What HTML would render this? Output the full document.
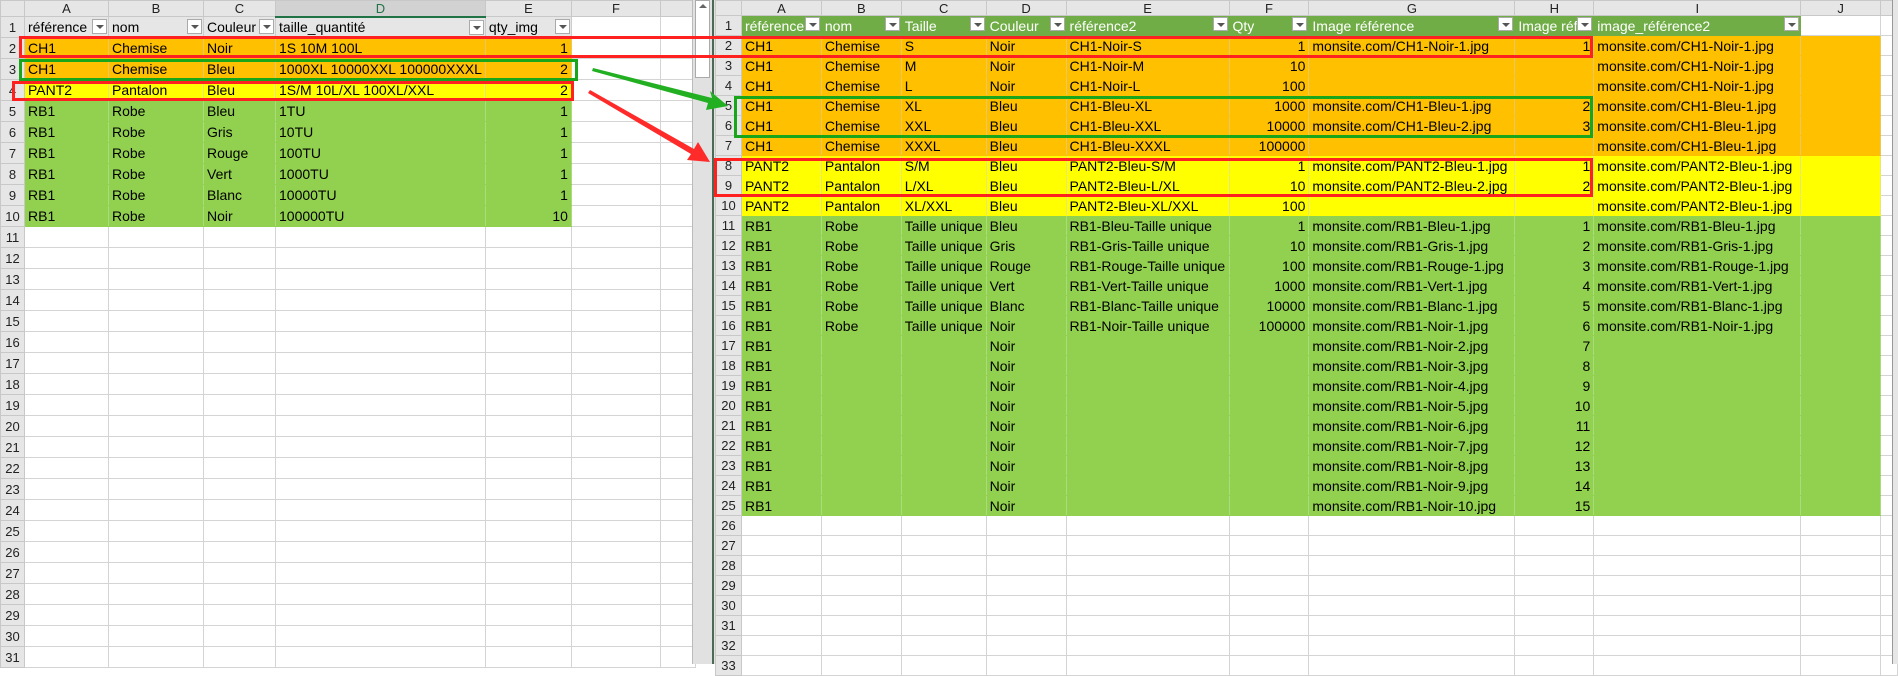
<!DOCTYPE html>
<html><head><meta charset="utf-8">
<style>
*{margin:0;padding:0;box-sizing:border-box}
body{width:1898px;height:664px;overflow:hidden;background:#fff;font-family:"Liberation Sans",sans-serif;font-size:14px;color:#000;position:relative}
table{border-collapse:collapse;table-layout:fixed;position:absolute;top:0}
td{border:1px solid #d4d4d4;white-space:nowrap;overflow:hidden;padding:0 3px;line-height:1;vertical-align:middle;position:relative}
td.h{background:#e6e6e6;text-align:center;color:#222;border-color:#c8c8c8;font-size:13px}
td.r{background:#e6e6e6;text-align:center;color:#222;border-color:#c8c8c8;font-size:13px}
td.n{text-align:right}
.o td.c{background:#ffc000;border-color:#ffc000 #e9c766}
.y td.c{background:#ffff00;border-color:#ffff00 #e6e680}
.g td.c{background:#92d050;border-color:#92d050 #a9dc7a}
.hdL td.c{background:#e7e6e6;border-color:#e7e6e6 #ccc}
.hdR td.c{background:#70ad47;color:#fff;border-color:#70ad47}
.dd{position:absolute;right:1px;top:2px;width:15px;height:15px;background:#fff;border:1px solid #aaa}
#R .dd{top:1px;height:14px}
.dd:after{content:"";position:absolute;left:3px;top:5px;border-left:4px solid transparent;border-right:4px solid transparent;border-top:4px solid #555}
#L{left:0}
#L tr{height:21px}
#L tr.top{height:16px}
#R{left:715px}
#R tr{height:20px}
#R tr.top{height:15px}
.box{position:absolute;border:3px solid;pointer-events:none}
</style></head><body>
<table id="L">
<colgroup><col style="width:24px"><col style="width:84px"><col style="width:95px"><col style="width:72px"><col style="width:207px"><col style="width:86px"><col style="width:89px"><col style="width:35px"></colgroup>
<tr class="top"><td class="h"></td><td class="h">A</td><td class="h">B</td><td class="h">C</td><td class="h" style="background:#d2d2d2;border-bottom:2px solid #217346;color:#217346">D</td><td class="h">E</td><td class="h">F</td><td class="h"></td></tr>
<tr class="hdL"><td class="r">1</td><td class="c">référence<span class="dd"></span></td><td class="c">nom<span class="dd"></span></td><td class="c">Couleur<span class="dd"></span></td><td class="c">taille_quantité<span class="dd"></span></td><td class="c">qty_img<span class="dd"></span></td><td></td><td></td></tr>
<tr class="o"><td class="r">2</td><td class="c">CH1</td><td class="c">Chemise</td><td class="c">Noir</td><td class="c">1S 10M 100L</td><td class="c n">1</td><td></td><td></td></tr>
<tr class="o"><td class="r">3</td><td class="c">CH1</td><td class="c">Chemise</td><td class="c">Bleu</td><td class="c">1000XL 10000XXL 100000XXXL</td><td class="c n">2</td><td></td><td></td></tr>
<tr class="y"><td class="r">4</td><td class="c">PANT2</td><td class="c">Pantalon</td><td class="c">Bleu</td><td class="c">1S/M 10L/XL 100XL/XXL</td><td class="c n">2</td><td></td><td></td></tr>
<tr class="g"><td class="r">5</td><td class="c">RB1</td><td class="c">Robe</td><td class="c">Bleu</td><td class="c">1TU</td><td class="c n">1</td><td></td><td></td></tr>
<tr class="g"><td class="r">6</td><td class="c">RB1</td><td class="c">Robe</td><td class="c">Gris</td><td class="c">10TU</td><td class="c n">1</td><td></td><td></td></tr>
<tr class="g"><td class="r">7</td><td class="c">RB1</td><td class="c">Robe</td><td class="c">Rouge</td><td class="c">100TU</td><td class="c n">1</td><td></td><td></td></tr>
<tr class="g"><td class="r">8</td><td class="c">RB1</td><td class="c">Robe</td><td class="c">Vert</td><td class="c">1000TU</td><td class="c n">1</td><td></td><td></td></tr>
<tr class="g"><td class="r">9</td><td class="c">RB1</td><td class="c">Robe</td><td class="c">Blanc</td><td class="c">10000TU</td><td class="c n">1</td><td></td><td></td></tr>
<tr class="g"><td class="r">10</td><td class="c">RB1</td><td class="c">Robe</td><td class="c">Noir</td><td class="c">100000TU</td><td class="c n">10</td><td></td><td></td></tr>
<tr><td class="r">11</td><td></td><td></td><td></td><td></td><td></td><td></td><td></td></tr>
<tr><td class="r">12</td><td></td><td></td><td></td><td></td><td></td><td></td><td></td></tr>
<tr><td class="r">13</td><td></td><td></td><td></td><td></td><td></td><td></td><td></td></tr>
<tr><td class="r">14</td><td></td><td></td><td></td><td></td><td></td><td></td><td></td></tr>
<tr><td class="r">15</td><td></td><td></td><td></td><td></td><td></td><td></td><td></td></tr>
<tr><td class="r">16</td><td></td><td></td><td></td><td></td><td></td><td></td><td></td></tr>
<tr><td class="r">17</td><td></td><td></td><td></td><td></td><td></td><td></td><td></td></tr>
<tr><td class="r">18</td><td></td><td></td><td></td><td></td><td></td><td></td><td></td></tr>
<tr><td class="r">19</td><td></td><td></td><td></td><td></td><td></td><td></td><td></td></tr>
<tr><td class="r">20</td><td></td><td></td><td></td><td></td><td></td><td></td><td></td></tr>
<tr><td class="r">21</td><td></td><td></td><td></td><td></td><td></td><td></td><td></td></tr>
<tr><td class="r">22</td><td></td><td></td><td></td><td></td><td></td><td></td><td></td></tr>
<tr><td class="r">23</td><td></td><td></td><td></td><td></td><td></td><td></td><td></td></tr>
<tr><td class="r">24</td><td></td><td></td><td></td><td></td><td></td><td></td><td></td></tr>
<tr><td class="r">25</td><td></td><td></td><td></td><td></td><td></td><td></td><td></td></tr>
<tr><td class="r">26</td><td></td><td></td><td></td><td></td><td></td><td></td><td></td></tr>
<tr><td class="r">27</td><td></td><td></td><td></td><td></td><td></td><td></td><td></td></tr>
<tr><td class="r">28</td><td></td><td></td><td></td><td></td><td></td><td></td><td></td></tr>
<tr><td class="r">29</td><td></td><td></td><td></td><td></td><td></td><td></td><td></td></tr>
<tr><td class="r">30</td><td></td><td></td><td></td><td></td><td></td><td></td><td></td></tr>
<tr><td class="r">31</td><td></td><td></td><td></td><td></td><td></td><td></td><td></td></tr>
</table>

<div style="position:absolute;left:692px;top:0;width:23px;height:664px;background:#e1e1e1;border-left:1px solid #bbb"></div>
<div style="position:absolute;left:695px;top:0;width:15px;height:78px;background:#fff;border:1px solid #aaa"></div>
<div style="position:absolute;left:699px;top:4px;border-left:4px solid transparent;border-right:4px solid transparent;border-bottom:4px solid #666"></div>
<div style="position:absolute;left:712px;top:0;width:2px;height:664px;background:#4a6a55"></div>

<table id="R">
<colgroup><col style="width:26px"><col style="width:80px"><col style="width:80px"><col style="width:79px"><col style="width:80px"><col style="width:163px"><col style="width:80px"><col style="width:206px"><col style="width:79px"><col style="width:207px"><col style="width:80px"><col style="width:17px"></colgroup>
<tr class="top"><td class="h"></td><td class="h">A</td><td class="h">B</td><td class="h">C</td><td class="h">D</td><td class="h">E</td><td class="h">F</td><td class="h">G</td><td class="h">H</td><td class="h">I</td><td class="h">J</td><td class="h"></td></tr>
<tr class="hdR"><td class="r">1</td><td class="c">référence<span class="dd"></span></td><td class="c">nom<span class="dd"></span></td><td class="c">Taille<span class="dd"></span></td><td class="c">Couleur<span class="dd"></span></td><td class="c">référence2<span class="dd"></span></td><td class="c">Qty<span class="dd"></span></td><td class="c">Image référence<span class="dd"></span></td><td class="c">Image réf<span class="dd"></span></td><td class="c">image_référence2<span class="dd"></span></td><td></td><td></td></tr>
<tr class="o"><td class="r">2</td><td class="c">CH1</td><td class="c">Chemise</td><td class="c">S</td><td class="c">Noir</td><td class="c">CH1-Noir-S</td><td class="c n">1</td><td class="c">monsite.com/CH1-Noir-1.jpg</td><td class="c n">1</td><td class="c">monsite.com/CH1-Noir-1.jpg</td><td class="c"></td><td></td></tr>
<tr class="o"><td class="r">3</td><td class="c">CH1</td><td class="c">Chemise</td><td class="c">M</td><td class="c">Noir</td><td class="c">CH1-Noir-M</td><td class="c n">10</td><td class="c"></td><td class="c n"></td><td class="c">monsite.com/CH1-Noir-1.jpg</td><td class="c"></td><td></td></tr>
<tr class="o"><td class="r">4</td><td class="c">CH1</td><td class="c">Chemise</td><td class="c">L</td><td class="c">Noir</td><td class="c">CH1-Noir-L</td><td class="c n">100</td><td class="c"></td><td class="c n"></td><td class="c">monsite.com/CH1-Noir-1.jpg</td><td class="c"></td><td></td></tr>
<tr class="o"><td class="r">5</td><td class="c">CH1</td><td class="c">Chemise</td><td class="c">XL</td><td class="c">Bleu</td><td class="c">CH1-Bleu-XL</td><td class="c n">1000</td><td class="c">monsite.com/CH1-Bleu-1.jpg</td><td class="c n">2</td><td class="c">monsite.com/CH1-Bleu-1.jpg</td><td class="c"></td><td></td></tr>
<tr class="o"><td class="r">6</td><td class="c">CH1</td><td class="c">Chemise</td><td class="c">XXL</td><td class="c">Bleu</td><td class="c">CH1-Bleu-XXL</td><td class="c n">10000</td><td class="c">monsite.com/CH1-Bleu-2.jpg</td><td class="c n">3</td><td class="c">monsite.com/CH1-Bleu-1.jpg</td><td class="c"></td><td></td></tr>
<tr class="o"><td class="r">7</td><td class="c">CH1</td><td class="c">Chemise</td><td class="c">XXXL</td><td class="c">Bleu</td><td class="c">CH1-Bleu-XXXL</td><td class="c n">100000</td><td class="c"></td><td class="c n"></td><td class="c">monsite.com/CH1-Bleu-1.jpg</td><td class="c"></td><td></td></tr>
<tr class="y"><td class="r">8</td><td class="c">PANT2</td><td class="c">Pantalon</td><td class="c">S/M</td><td class="c">Bleu</td><td class="c">PANT2-Bleu-S/M</td><td class="c n">1</td><td class="c">monsite.com/PANT2-Bleu-1.jpg</td><td class="c n">1</td><td class="c">monsite.com/PANT2-Bleu-1.jpg</td><td class="c"></td><td></td></tr>
<tr class="y"><td class="r">9</td><td class="c">PANT2</td><td class="c">Pantalon</td><td class="c">L/XL</td><td class="c">Bleu</td><td class="c">PANT2-Bleu-L/XL</td><td class="c n">10</td><td class="c">monsite.com/PANT2-Bleu-2.jpg</td><td class="c n">2</td><td class="c">monsite.com/PANT2-Bleu-1.jpg</td><td class="c"></td><td></td></tr>
<tr class="y"><td class="r">10</td><td class="c">PANT2</td><td class="c">Pantalon</td><td class="c">XL/XXL</td><td class="c">Bleu</td><td class="c">PANT2-Bleu-XL/XXL</td><td class="c n">100</td><td class="c"></td><td class="c n"></td><td class="c">monsite.com/PANT2-Bleu-1.jpg</td><td class="c"></td><td></td></tr>
<tr class="g"><td class="r">11</td><td class="c">RB1</td><td class="c">Robe</td><td class="c">Taille unique</td><td class="c">Bleu</td><td class="c">RB1-Bleu-Taille unique</td><td class="c n">1</td><td class="c">monsite.com/RB1-Bleu-1.jpg</td><td class="c n">1</td><td class="c">monsite.com/RB1-Bleu-1.jpg</td><td class="c"></td><td></td></tr>
<tr class="g"><td class="r">12</td><td class="c">RB1</td><td class="c">Robe</td><td class="c">Taille unique</td><td class="c">Gris</td><td class="c">RB1-Gris-Taille unique</td><td class="c n">10</td><td class="c">monsite.com/RB1-Gris-1.jpg</td><td class="c n">2</td><td class="c">monsite.com/RB1-Gris-1.jpg</td><td class="c"></td><td></td></tr>
<tr class="g"><td class="r">13</td><td class="c">RB1</td><td class="c">Robe</td><td class="c">Taille unique</td><td class="c">Rouge</td><td class="c">RB1-Rouge-Taille unique</td><td class="c n">100</td><td class="c">monsite.com/RB1-Rouge-1.jpg</td><td class="c n">3</td><td class="c">monsite.com/RB1-Rouge-1.jpg</td><td class="c"></td><td></td></tr>
<tr class="g"><td class="r">14</td><td class="c">RB1</td><td class="c">Robe</td><td class="c">Taille unique</td><td class="c">Vert</td><td class="c">RB1-Vert-Taille unique</td><td class="c n">1000</td><td class="c">monsite.com/RB1-Vert-1.jpg</td><td class="c n">4</td><td class="c">monsite.com/RB1-Vert-1.jpg</td><td class="c"></td><td></td></tr>
<tr class="g"><td class="r">15</td><td class="c">RB1</td><td class="c">Robe</td><td class="c">Taille unique</td><td class="c">Blanc</td><td class="c">RB1-Blanc-Taille unique</td><td class="c n">10000</td><td class="c">monsite.com/RB1-Blanc-1.jpg</td><td class="c n">5</td><td class="c">monsite.com/RB1-Blanc-1.jpg</td><td class="c"></td><td></td></tr>
<tr class="g"><td class="r">16</td><td class="c">RB1</td><td class="c">Robe</td><td class="c">Taille unique</td><td class="c">Noir</td><td class="c">RB1-Noir-Taille unique</td><td class="c n">100000</td><td class="c">monsite.com/RB1-Noir-1.jpg</td><td class="c n">6</td><td class="c">monsite.com/RB1-Noir-1.jpg</td><td class="c"></td><td></td></tr>
<tr class="g"><td class="r">17</td><td class="c">RB1</td><td class="c"></td><td class="c"></td><td class="c">Noir</td><td class="c"></td><td class="c"></td><td class="c">monsite.com/RB1-Noir-2.jpg</td><td class="c n">7</td><td class="c"></td><td class="c"></td><td></td></tr>
<tr class="g"><td class="r">18</td><td class="c">RB1</td><td class="c"></td><td class="c"></td><td class="c">Noir</td><td class="c"></td><td class="c"></td><td class="c">monsite.com/RB1-Noir-3.jpg</td><td class="c n">8</td><td class="c"></td><td class="c"></td><td></td></tr>
<tr class="g"><td class="r">19</td><td class="c">RB1</td><td class="c"></td><td class="c"></td><td class="c">Noir</td><td class="c"></td><td class="c"></td><td class="c">monsite.com/RB1-Noir-4.jpg</td><td class="c n">9</td><td class="c"></td><td class="c"></td><td></td></tr>
<tr class="g"><td class="r">20</td><td class="c">RB1</td><td class="c"></td><td class="c"></td><td class="c">Noir</td><td class="c"></td><td class="c"></td><td class="c">monsite.com/RB1-Noir-5.jpg</td><td class="c n">10</td><td class="c"></td><td class="c"></td><td></td></tr>
<tr class="g"><td class="r">21</td><td class="c">RB1</td><td class="c"></td><td class="c"></td><td class="c">Noir</td><td class="c"></td><td class="c"></td><td class="c">monsite.com/RB1-Noir-6.jpg</td><td class="c n">11</td><td class="c"></td><td class="c"></td><td></td></tr>
<tr class="g"><td class="r">22</td><td class="c">RB1</td><td class="c"></td><td class="c"></td><td class="c">Noir</td><td class="c"></td><td class="c"></td><td class="c">monsite.com/RB1-Noir-7.jpg</td><td class="c n">12</td><td class="c"></td><td class="c"></td><td></td></tr>
<tr class="g"><td class="r">23</td><td class="c">RB1</td><td class="c"></td><td class="c"></td><td class="c">Noir</td><td class="c"></td><td class="c"></td><td class="c">monsite.com/RB1-Noir-8.jpg</td><td class="c n">13</td><td class="c"></td><td class="c"></td><td></td></tr>
<tr class="g"><td class="r">24</td><td class="c">RB1</td><td class="c"></td><td class="c"></td><td class="c">Noir</td><td class="c"></td><td class="c"></td><td class="c">monsite.com/RB1-Noir-9.jpg</td><td class="c n">14</td><td class="c"></td><td class="c"></td><td></td></tr>
<tr class="g"><td class="r">25</td><td class="c">RB1</td><td class="c"></td><td class="c"></td><td class="c">Noir</td><td class="c"></td><td class="c"></td><td class="c">monsite.com/RB1-Noir-10.jpg</td><td class="c n">15</td><td class="c"></td><td class="c"></td><td></td></tr>
<tr><td class="r">26</td><td></td><td></td><td></td><td></td><td></td><td></td><td></td><td></td><td></td><td></td><td></td></tr>
<tr><td class="r">27</td><td></td><td></td><td></td><td></td><td></td><td></td><td></td><td></td><td></td><td></td><td></td></tr>
<tr><td class="r">28</td><td></td><td></td><td></td><td></td><td></td><td></td><td></td><td></td><td></td><td></td><td></td></tr>
<tr><td class="r">29</td><td></td><td></td><td></td><td></td><td></td><td></td><td></td><td></td><td></td><td></td><td></td></tr>
<tr><td class="r">30</td><td></td><td></td><td></td><td></td><td></td><td></td><td></td><td></td><td></td><td></td><td></td></tr>
<tr><td class="r">31</td><td></td><td></td><td></td><td></td><td></td><td></td><td></td><td></td><td></td><td></td><td></td></tr>
<tr><td class="r">32</td><td></td><td></td><td></td><td></td><td></td><td></td><td></td><td></td><td></td><td></td><td></td></tr>
<tr><td class="r">33</td><td></td><td></td><td></td><td></td><td></td><td></td><td></td><td></td><td></td><td></td><td></td></tr>
</table>
<div style="position:absolute;left:1892px;top:0;width:6px;height:664px;background:#e6e6e6;border-left:1px solid #999"></div>

<div class="box" style="left:19px;top:36px;width:1574px;height:22px;border-color:#ff2020"></div>
<div class="box" style="left:19px;top:59px;width:559px;height:22px;border-color:#1aa61a"></div>
<div class="box" style="left:12px;top:81px;width:562px;height:20px;border-color:#ff2020"></div>
<div class="box" style="left:734px;top:96px;width:859px;height:42px;border-color:#1aa61a"></div>
<div class="box" style="left:714px;top:158px;width:879px;height:39px;border-color:#ff2020"></div>

<svg width="1898" height="664" style="position:absolute;left:0;top:0;pointer-events:none">
<polygon points="593,68 712,98 710,91 728,106 706,110 708,103 592,71" fill="#22b022"/>
<polygon points="590,90 694,149 698,142 710,162 687,160 691,154 588,93" fill="#ff2a2a"/>
</svg>
</body></html>
